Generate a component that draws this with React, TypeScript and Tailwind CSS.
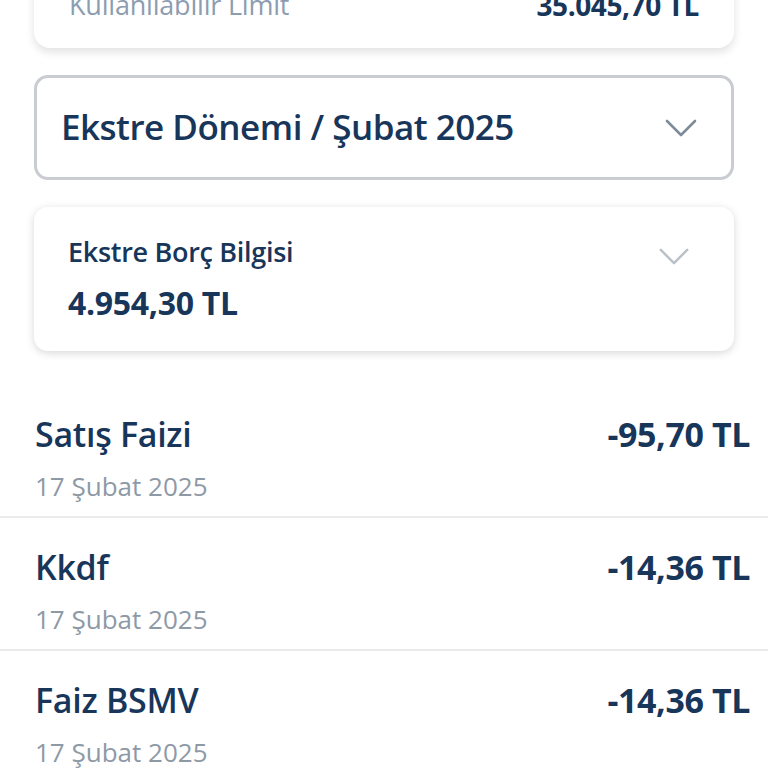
const rows = [
  { title: 'Satış Faizi', amount: '-95,70 TL', date: '17 Şubat 2025' },
  { title: 'Kkdf', amount: '-14,36 TL', date: '17 Şubat 2025' },
  { title: 'Faiz BSMV', amount: '-14,36 TL', date: '17 Şubat 2025' },
];

function Chevron({ className }: { className?: string }) {
  return (
    <svg viewBox="0 0 32 18" className={className} fill="none" stroke="currentColor" strokeWidth="2.6" strokeLinecap="round" strokeLinejoin="round">
      <path d="M2 2l14 14L30 2" />
    </svg>
  );
}

export default function App() {
  return (
    <div className="h-[768px] w-[768px] overflow-hidden bg-white font-['Open_Sans',sans-serif] text-[#18355a]">
      <div className="px-[34px]">
        {/* Limit card (scrolled) */}
        <div className="-mt-[40px] flex h-[88px] items-start justify-between rounded-b-[16px] bg-white px-[35px] pt-[29px] shadow-[0_4px_10px_rgba(0,0,0,0.12)]">
          <span className="text-[27px] leading-[32px] tracking-[-0.2px] text-[#8c9db1]">Kullanılabilir Limit</span>
          <span className="text-[28px] font-bold leading-[32px] tracking-[-0.4px]">35.045,70 TL</span>
        </div>

        {/* Period select */}
        <div className="mt-[27px] flex h-[105px] items-center justify-between rounded-[14px] border-[3px] border-[#c9ccd1] pl-[24px] pr-[34px]">
          <span className="text-[35px] font-semibold tracking-[-0.5px]">Ekstre Dönemi / Şubat 2025</span>
          <Chevron className="h-[18px] w-[32px] text-[#7e8b9a]" />
        </div>

        {/* Statement debt card */}
        <div className="mt-[27px] flex h-[144px] justify-between rounded-[14px] bg-white pl-[34px] pr-[44px] pt-[28px] shadow-[0_2px_8px_rgba(0,0,0,0.16)]">
          <div className="flex flex-col">
            <span className="text-[27px] font-semibold leading-[34px] tracking-[-0.3px]">Ekstre Borç Bilgisi</span>
            <span className="mt-[15px] text-[32px] font-bold leading-[38px] tracking-[-0.3px]">4.954,30 TL</span>
          </div>
          <Chevron className="mt-[13px] h-[17px] w-[32px] text-[#bac1c9]" />
        </div>
      </div>

      {/* Transactions */}
      <div className="mt-[34px]">
        {rows.map((r) => (
          <div key={r.title} className="h-[133px] border-b-2 border-[#ebebeb] px-[35px] pt-[29px]">
            <div className="flex items-center justify-between">
              <span className="text-[34px] font-semibold leading-[40px] tracking-[-0.3px]">{r.title}</span>
              <span className="mr-[-17px] text-[34px] font-bold leading-[40px] tracking-[-0.4px]">{r.amount}</span>
            </div>
            <div className="mt-[17px] text-[26px] leading-[30px] text-[#8e99a6]">{r.date}</div>
          </div>
        ))}
      </div>
    </div>
  );
}
